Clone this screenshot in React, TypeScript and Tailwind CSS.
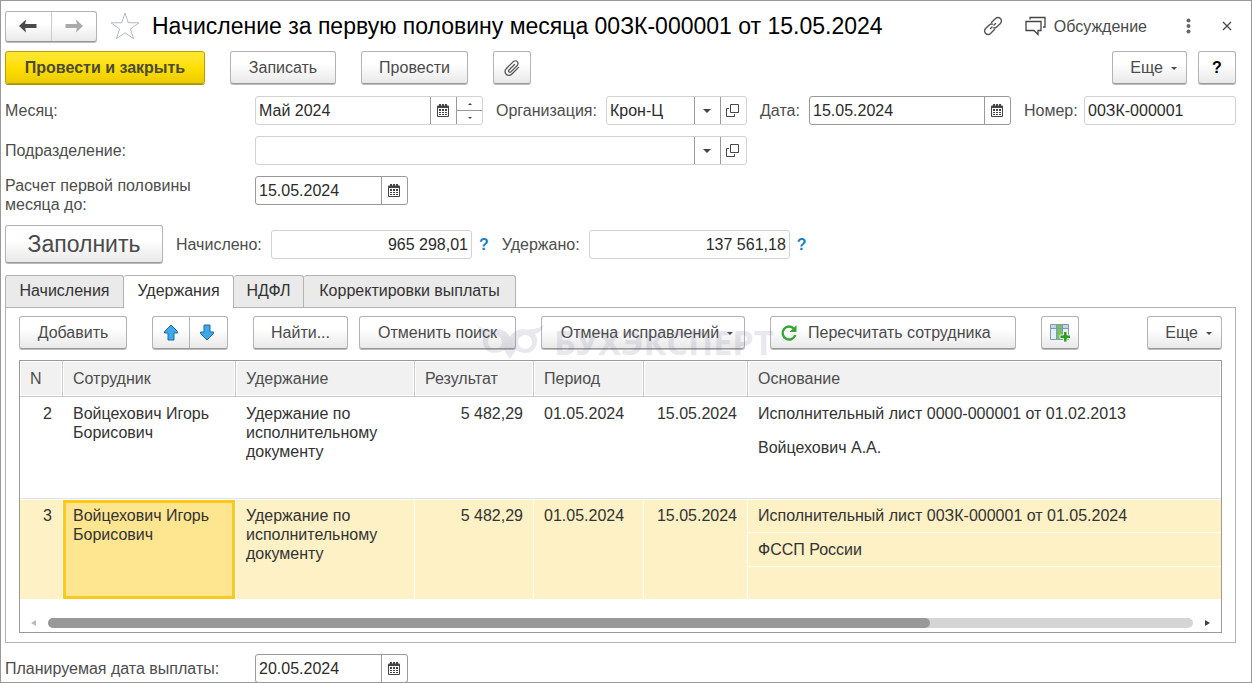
import type { ReactNode } from "react";
import clsx from "clsx";

const tabs = [
  { name: "Начисления", width: "w-[119px]" },
  { name: "Удержания", width: "w-[110px]" },
  { name: "НДФЛ", width: "w-[70px]" },
  { name: "Корректировки выплаты", width: "w-[212px]" },
];

const rows = [
  {
    n: 2,
    employee: "Войцехович Игорь Борисович",
    deduction: "Удержание по исполнительному документу",
    result: "5 482,29",
    from: "01.05.2024",
    to: "15.05.2024",
    basis: ["Исполнительный лист 0000-000001 от 01.02.2013", "Войцехович А.А."],
    selected: false,
  },
  {
    n: 3,
    employee: "Войцехович Игорь Борисович",
    deduction: "Удержание по исполнительному документу",
    result: "5 482,29",
    from: "01.05.2024",
    to: "15.05.2024",
    basis: ["Исполнительный лист 00ЗК-000001 от 01.05.2024", "ФССП России"],
    selected: true,
  },
];

const buttonLook =
  "flex shrink-0 items-center rounded-[3px] border border-[#b3b3b3] border-b-[#999] bg-linear-to-b from-white from-40% to-[#e9e9e9] text-[#4a4a4a] shadow-[0_1px_0_#bbb]";

function Button({ className, label, start, children }: { className?: string; label?: string; start?: boolean; children: ReactNode }) {
  return (
    <button
      type="button"
      aria-label={label}
      className={clsx(buttonLook, "h-[33px] whitespace-nowrap", start ? "justify-start" : "justify-center", className)}
    >
      {children}
    </button>
  );
}

function Caret({ className = "ml-2 mt-0.5" }: { className?: string }) {
  return (
    <svg viewBox="0 0 6 3" className={clsx("h-[3px] w-1.5 shrink-0", className)} fill="#4a4a4a" aria-hidden="true">
      <path d="M0 0h6L3 3z" />
    </svg>
  );
}

function FieldCaret() {
  return (
    <svg viewBox="0 0 8 4" className="h-1 w-2" fill="#444" aria-hidden="true">
      <path d="M0 0h8L4 4z" />
    </svg>
  );
}

function CalendarIcon() {
  return (
    <svg viewBox="0 0 12 13" className="h-[13px] w-3" aria-hidden="true">
      <path d="M0 2.500q0-1 1-1h1V0h2v1.500h1V0h2v1.500h1V0h2v1.500h1q1 0 1 1V12q0 1-1 1H1q-1 0-1-1z" fill="#444" />
      <path d="M1 4h10v8H1z" fill="#fff" />
      <path d="M2 5h2v2H2zm3 0h2v2H5zm3 0h2v2H8zM2 8h2v1H2zm3 0h2v1H5zm3 0h2v1H8zM2 10h2v1H2zm3 0h2v1H5zm3 0h2v1H8z" fill="#444" />
    </svg>
  );
}

function OpenIcon() {
  return (
    <svg viewBox="0 0 13 13" className="size-[13px]" fill="none" stroke="#444" aria-hidden="true">
      <path d="M4.500.5h8v8h-8z" />
      <path d="M3 4.500H.5v8h8V10" />
    </svg>
  );
}

function FieldButton({ label, children }: { label: string; children: ReactNode }) {
  return (
    <button type="button" aria-label={label} className="flex w-[26px] shrink-0 items-center justify-center border-l border-[#999] pr-0.5">
      {children}
    </button>
  );
}

type FieldProps = { id: string; value?: string; className: string; strong?: boolean; right?: boolean; children?: ReactNode };

function Field({ id, value = "", className, strong, right, children }: FieldProps) {
  return (
    <div className={clsx("flex h-[29px] shrink-0 rounded-[3px] border bg-white", strong ? "border-[#999]" : "border-[#d2d2d2]", className)}>
      <input id={id} defaultValue={value} className={clsx("w-full min-w-0 bg-transparent px-[3px] text-[#2b2b2b] outline-none", right && "text-right")} />
      {children}
    </div>
  );
}

function Header() {
  return (
    <header className="flex h-8 items-center">
      <div className={clsx(buttonLook, "h-[31px] w-[92px]")}>
        <button type="button" aria-label="Назад" className="flex h-full flex-1 items-center justify-center">
          <svg viewBox="0 0 18 14" className="h-3.5 w-[18px]" aria-hidden="true">
            <path d="M0 7l7-6.500-.8 4.500H17.500v4H6.200L7 13.500z" fill="#4a4a4a" />
          </svg>
        </button>
        <button type="button" aria-label="Вперед" className="flex h-full flex-1 items-center justify-center border-l border-[#ccc]">
          <svg viewBox="0 0 18 14" className="h-3.5 w-[18px]" aria-hidden="true">
            <path d="M18 7l-7-6.500.8 4.500H.5v4h11.300L11 13.500z" fill="#aaa" />
          </svg>
        </button>
      </div>
      <button type="button" aria-label="В избранное" className="ml-[13px]">
        <svg viewBox="0 0 30 28" className="h-7 w-[30px]" fill="none" stroke="#b4bac4" aria-hidden="true">
          <path d="M15 1l3.300 9.700 10.700.1-8.600 6.200 3.200 9.700L15 20.800l-8.600 5.900 3.200-9.700L1 10.800l10.700-.1z" />
        </svg>
      </button>
      <h1 className="ml-3 truncate text-[23px] leading-8 text-black">Начисление за первую половину месяца 00ЗК-000001 от 15.05.2024</h1>
      <div className="ml-auto flex shrink-0 items-center text-[#4a4a4a]">
        <button type="button" aria-label="Ссылка">
          <svg viewBox="0 0 20 20" className="size-5" fill="none" stroke="#555" strokeWidth="1.400" strokeLinecap="round" aria-hidden="true">
            <path d="M8.500 6.500l4-4a3.400 3.400 0 0 1 4.900 0a3.400 3.400 0 0 1 0 4.900L13.700 11a3.400 3.400 0 0 1-3.200.9" />
            <path d="M11.500 13.500l-4 4a3.400 3.400 0 0 1-4.900 0a3.400 3.400 0 0 1 0-4.900L6.300 9a3.400 3.400 0 0 1 3.200-.9" />
            <path d="M7.500 12.500l1.600-1.600M11 9l1.600-1.600" />
          </svg>
        </button>
        <button type="button" className="ml-[22px] flex items-center gap-2">
          <svg viewBox="0 0 21 20" className="h-5 w-[21px]" fill="none" stroke="#444" strokeWidth="1.300" aria-hidden="true">
            <path d="M1 5.500h15v9h-3v4l-4-4H1z" />
            <path d="M5 3.500V1.500h15v9.500h-2" />
          </svg>
          Обсуждение
        </button>
        <button type="button" aria-label="Меню" className="ml-[39px]">
          <svg viewBox="0 0 5 16" className="h-4 w-[5px]" fill="#666" aria-hidden="true">
            <circle cx="2.500" cy="2.500" r="2" />
            <circle cx="2.500" cy="8" r="2" />
            <circle cx="2.500" cy="13.500" r="2" />
          </svg>
        </button>
        <button type="button" aria-label="Закрыть" className="ml-[31px] mr-1">
          <svg viewBox="0 0 10 10" className="size-2.5" stroke="#444" strokeWidth="1.200" aria-hidden="true">
            <path d="M1 1l8 8M9 1L1 9" />
          </svg>
        </button>
      </div>
    </header>
  );
}

function CommandBar() {
  return (
    <div className="mt-[9px] flex">
      <button
        type="button"
        className="h-[33px] w-[200px] shrink-0 rounded-[3px] border border-[#b59f00] bg-linear-to-b from-[#ffe833] via-[#ffdf00] to-[#eccb00] font-bold text-[#4a4a3c] shadow-[0_1px_0_#a89400]"
      >
        Провести и закрыть
      </button>
      <Button className="ml-[25px] w-[106px]">Записать</Button>
      <Button className="ml-[25px] w-[107px]">Провести</Button>
      <Button className="ml-[25px] w-[38px]" label="Присоединенные файлы">
        <svg viewBox="0 0 18 18" className="size-[18px]" fill="none" stroke="#555" strokeWidth="1.300" strokeLinecap="round" aria-hidden="true">
          <path d="M11.500 5.500L6 11a1.300 1.300 0 0 0 1.900 1.900l6.300-6.400a2.700 2.700 0 0 0-3.900-3.900L3.200 9.700a3.900 3.900 0 0 0 5.500 5.600l6.800-6.900" />
        </svg>
      </Button>
      <Button className="ml-auto w-[75px] pl-2">
        Еще
        <Caret />
      </Button>
      <Button className="ml-[11px] w-[38px] font-bold text-black" label="Справка">
        ?
      </Button>
    </div>
  );
}

function Fields() {
  return (
    <>
      <div className="mt-3 flex items-center">
        <label htmlFor="month" className="w-[250px] shrink-0">Месяц:</label>
        <Field id="month" value="Май 2024" className="w-[228px]">
          <FieldButton label="Выбрать месяц"><CalendarIcon /></FieldButton>
          <div className="flex w-[26px] shrink-0 flex-col border-l border-[#999]">
            <button type="button" aria-label="Следующий месяц" className="flex flex-1 items-center justify-center border-b border-[#999]">
              <svg viewBox="0 0 4 2" className="h-0.5 w-1" fill="#444" aria-hidden="true"><path d="M0 2h4L2 0z" /></svg>
            </button>
            <button type="button" aria-label="Предыдущий месяц" className="flex flex-1 items-center justify-center">
              <svg viewBox="0 0 4 2" className="h-0.5 w-1" fill="#444" aria-hidden="true"><path d="M0 0h4L2 2z" /></svg>
            </button>
          </div>
        </Field>
        <label htmlFor="company" className="ml-[13px] w-[110px] shrink-0">Организация:</label>
        <Field id="company" value="Крон-Ц" className="w-[141px]">
          <FieldButton label="Выбрать организацию"><FieldCaret /></FieldButton>
          <FieldButton label="Открыть организацию"><OpenIcon /></FieldButton>
        </Field>
        <label htmlFor="date" className="ml-[13px] w-[49px] shrink-0">Дата:</label>
        <Field id="date" value="15.05.2024" strong className="w-[202px]">
          <FieldButton label="Выбрать дату"><CalendarIcon /></FieldButton>
        </Field>
        <label htmlFor="number" className="ml-[13px] w-[60px] shrink-0">Номер:</label>
        <Field id="number" value="00ЗК-000001" className="w-[152px]" />
      </div>
      <div className="mt-[11px] flex items-center">
        <label htmlFor="department" className="w-[250px] shrink-0">Подразделение:</label>
        <Field id="department" className="w-[492px]">
          <FieldButton label="Выбрать подразделение"><FieldCaret /></FieldButton>
          <FieldButton label="Открыть подразделение"><OpenIcon /></FieldButton>
        </Field>
      </div>
      <div className="mt-[11px] flex items-start">
        <label htmlFor="until" className="w-[250px] shrink-0 pr-10">Расчет первой половины месяца до:</label>
        <Field id="until" value="15.05.2024" strong className="w-[153px]">
          <FieldButton label="Выбрать дату расчета"><CalendarIcon /></FieldButton>
        </Field>
      </div>
      <div className="mt-[11px] flex items-center">
        <button type="button" className={clsx(buttonLook, "h-[38px] w-[158px] justify-center text-[23px]")}>Заполнить</button>
        <label htmlFor="accrued" className="ml-[13px] w-[95px] shrink-0">Начислено:</label>
        <Field id="accrued" value="965 298,01" right className="w-[201px]" />
        <button type="button" aria-label="Подробнее о начислениях" className="ml-[7px] font-bold text-[#1a7fc6]">?</button>
        <label htmlFor="withheld" className="ml-[13px] w-[87px] shrink-0">Удержано:</label>
        <Field id="withheld" value="137 561,18" right className="w-[201px]" />
        <button type="button" aria-label="Подробнее об удержаниях" className="ml-[7px] font-bold text-[#1a7fc6]">?</button>
      </div>
    </>
  );
}

function Watermark() {
  return (
    <div className="pointer-events-none absolute left-[457px] top-2 flex items-center text-[#6a6a90] opacity-15" aria-hidden="true">
      <svg viewBox="0 0 68 36" className="h-9 w-[68px]">
        <path
          fill="currentColor"
          fillRule="evenodd"
          d="M0 1q10 6 22 4 8 1 12 8 4-7 12-8 12 2 22-4-2 7-9 9 3 4 2 9-2 10-12 10-5 0-9-3l-6 9-6-9q-4 3-9 3-10 0-12-10-1-5 2-9-5-2-7-9zM19 11a7 7 0 1 0 0 14a7 7 0 1 0 0-14zM49 11a7 7 0 1 0 0 14a7 7 0 1 0 0-14z"
        />
      </svg>
      <span className="ml-2.5 font-['Open_Sans',sans-serif] text-[34px] font-bold leading-9">БУХЭКСПЕРТ</span>
    </div>
  );
}

function Toolbar() {
  return (
    <div className="relative flex">
      <Button className="w-[108px]">Добавить</Button>
      <div className={clsx(buttonLook, "ml-[25px] h-[33px] w-[76px]")}>
        <button type="button" aria-label="Переместить вверх" className="flex h-full flex-1 items-center justify-center">
          <svg viewBox="0 0 16 17" className="h-[17px] w-4" fill="#3fa9e8" stroke="#1c6ba5" strokeLinejoin="round" aria-hidden="true">
            <path d="M8 1l6.500 6.500v1.500H11v7H5V9H1.500V7.500z" />
          </svg>
        </button>
        <button type="button" aria-label="Переместить вниз" className="flex h-full flex-1 items-center justify-center border-l border-[#b3b3b3] pr-0.5">
          <svg viewBox="0 0 16 17" className="h-[17px] w-4" fill="#3fa9e8" stroke="#1c6ba5" strokeLinejoin="round" aria-hidden="true">
            <path d="M8 16l6.500-6.500V8H11V1H5v7H1.500v1.500z" />
          </svg>
        </button>
      </div>
      <Button className="ml-[25px] w-[95px]">Найти...</Button>
      <Button className="ml-[11px] w-[157px]">Отменить поиск</Button>
      <Button className="ml-[25px] w-[204px] pl-2">
        Отмена исправлений
        <Caret />
      </Button>
      <Button start className="ml-[25px] w-[246px] gap-2.5 pl-[9px]">
        <svg viewBox="0 0 18 18" className="size-[18px]" aria-hidden="true">
          <path d="M14 4.700A6.500 6.500 0 1 0 15.300 11" fill="none" stroke="#35a635" strokeWidth="2.400" />
          <path d="M16.500 1v7h-7z" fill="#35a635" />
        </svg>
        Пересчитать сотрудника
      </Button>
      <Button className="ml-[25px] w-[38px]" label="Настроить колонки">
        <svg viewBox="0 0 20 18" className="h-[18px] w-5" aria-hidden="true">
          <path d="M.5.5h18v15H.5z" fill="#e4eef5" stroke="#7d9bb0" />
          <path d="M1 1h17v3H1z" fill="#c5d6e2" />
          <path d="M7 1h5v14H7z" fill="#7cc05e" />
          <path d="M6.500 1v14M12.500 1v14M1 4.500h17" stroke="#7d9bb0" />
          <path d="M13.500 7.500h3.500v3.500h3.500v3.500H17V18h-3.500v-3.500H10V11h3.500z" fill="#2f9e1f" stroke="#fff" strokeWidth=".8" />
        </svg>
      </Button>
      <Button className="ml-auto w-[75px] pl-2">
        Еще
        <Caret />
      </Button>
      <Watermark />
    </div>
  );
}

function HeadCell({ children }: { children?: ReactNode }) {
  return (
    <th className="h-9 border-b border-r border-[#c8c8c8] bg-[#f1f1f1] px-2.5 text-left font-normal text-[#4d4d4d] shadow-[inset_0_0_0_1px_#fff] last:border-r-0">
      {children}
    </th>
  );
}

function DeductionsTable() {
  return (
    <div className="mt-[11px] border border-[#999]">
      <table className="w-full table-fixed border-separate border-spacing-0 text-[#333]">
        <colgroup>
          <col className="w-[43px]" />
          <col className="w-[173px]" />
          <col className="w-[179px]" />
          <col className="w-[119px]" />
          <col className="w-[110px]" />
          <col className="w-[104px]" />
          <col />
        </colgroup>
        <thead>
          <tr>
            <HeadCell>N</HeadCell>
            <HeadCell>Сотрудник</HeadCell>
            <HeadCell>Удержание</HeadCell>
            <HeadCell>Результат</HeadCell>
            <HeadCell>Период</HeadCell>
            <HeadCell />
            <HeadCell>Основание</HeadCell>
          </tr>
        </thead>
        <tbody>
          {rows.map((row) => {
            const cell = clsx(
              "border-white px-2.5 align-top",
              row.selected ? "border-r border-t bg-[#fdf1c5] pt-1.5" : "border-b border-r border-b-[#e1e4e6] pt-[7px]",
            );
            return (
              <tr key={row.n} className={row.selected ? "h-[100px]" : "h-[102px]"}>
                <td className={clsx(cell, "text-right")}>{row.n}</td>
                <td className={clsx(cell, row.selected && "bg-[#fee590]! shadow-[inset_0_0_0_3px_#fbc91c]")}>{row.employee}</td>
                <td className={cell}>{row.deduction}</td>
                <td className={clsx(cell, "text-right")}>{row.result}</td>
                <td className={cell}>{row.from}</td>
                <td className={clsx(cell, "text-right")}>{row.to}</td>
                <td className={clsx("align-top", row.selected ? "border-t border-white bg-[#fdf1c5]" : "border-b border-[#e1e4e6]")}>
                  {row.basis.map((line, i) => (
                    <div
                      key={line}
                      className={clsx(
                        "truncate border-b border-white px-2.5",
                        row.selected && i === 0 ? "h-[33px] pt-1.5" : "h-[34px] pt-[7px]",
                      )}
                    >
                      {line}
                    </div>
                  ))}
                </td>
              </tr>
            );
          })}
        </tbody>
      </table>
      <div className="flex h-[33px] items-center pl-[11px] pr-[11px] pt-3.5">
        <svg viewBox="0 0 5 6" className="h-1.5 w-[5px]" fill="#bbb" aria-hidden="true"><path d="M5 0v6L0 3z" /></svg>
        <div className="mx-3 h-2.5 flex-1 rounded-full bg-[#d5d5d5]">
          <div className="h-full w-[77%] rounded-full bg-[#999]" />
        </div>
        <svg viewBox="0 0 5 6" className="h-1.5 w-[5px]" fill="#444" aria-hidden="true"><path d="M0 0v6l5-3z" /></svg>
      </div>
    </div>
  );
}

export default function App() {
  return (
    <main className="h-screen overflow-hidden border border-[#999] bg-white pl-1 pr-[15px] pt-[9px] font-['Liberation_Sans',Arial,sans-serif] text-base leading-[19px] text-[#4d4d4d]">
      <Header />
      <CommandBar />
      <Fields />
      <div role="tablist" className="mt-3 flex">
        {tabs.map((tab, i) => (
          <button
            key={tab.name}
            type="button"
            role="tab"
            aria-selected={i === 1}
            className={clsx(
              "shrink-0 rounded-t-[3px] border-r border-t border-[#b3b3b3] text-[#333] first:border-l",
              tab.width,
              i === 1 ? "relative -mb-px h-[33px] bg-white pb-[3px]" : "h-8 bg-[#eaeaea] pb-0.5",
            )}
          >
            {tab.name}
          </button>
        ))}
      </div>
      <section className="border border-[#b3b3b3] px-[13px] pb-[9px] pt-2">
        <Toolbar />
        <DeductionsTable />
      </section>
      <div className="mt-[11px] flex items-center">
        <label htmlFor="payday" className="w-[250px] shrink-0">Планируемая дата выплаты:</label>
        <Field id="payday" value="20.05.2024" strong className="w-[153px]">
          <FieldButton label="Выбрать дату выплаты"><CalendarIcon /></FieldButton>
        </Field>
      </div>
    </main>
  );
}
